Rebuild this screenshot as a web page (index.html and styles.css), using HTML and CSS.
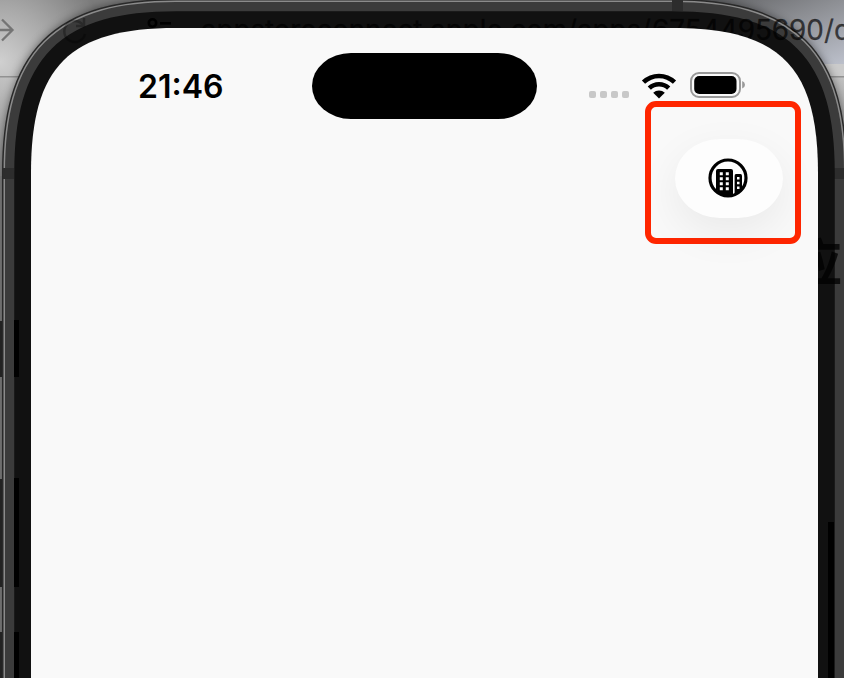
FILE: index.html
```html
<!DOCTYPE html>
<html lang="zh">
<head>
<meta charset="utf-8">
<title>Simulator</title>
<link rel="stylesheet" href="styles.css">
</head>
<body>
<main class="stage">
  <svg class="device" viewBox="0 0 844 678" aria-hidden="true">
    <defs>
      <path id="body" d="M31 760V173C31 66.300 69.300 28 176 28H673C779.700 28 818 66.300 818 173V760Z"/>
      <radialGradient id="left-bg" gradientUnits="userSpaceOnUse" cx="0" cy="62" r="110">
        <stop offset="0" stop-color="#d0d0d0"/><stop offset=".5" stop-color="#a8a8a8"/><stop offset="1" stop-color="#7c7c7c"/>
      </radialGradient>
      <linearGradient id="right-bg" x1="0" y1="0" x2="1" y2="1">
        <stop offset="0" stop-color="#5e5f61"/><stop offset=".5" stop-color="#8e9095"/><stop offset="1" stop-color="#bcc0cb"/>
      </linearGradient>
      <linearGradient id="side" x1="0" y1="0" x2="0" y2="1">
        <stop offset="0" stop-color="#c2c2c2"/><stop offset="1" stop-color="#8c8c8c"/>
      </linearGradient>
      <filter id="soft" x="-10%" y="-10%" width="120%" height="120%"><feGaussianBlur stdDeviation="5"/></filter>
    </defs>
    <rect class="base" width="844" height="678"/>
    <rect width="200" height="76" fill="url(#left-bg)"/>
    <rect y="76" width="60" height="100" fill="url(#side)"/>
    <rect class="rule" y="76" width="60" height="1.5"/>
    <rect x="690" width="154" height="64" fill="url(#right-bg)"/>
    <rect class="tab-edge" x="780" y="64" width="64" height="12"/>
    <rect x="780" y="76" width="64" height="100" fill="url(#side)"/>
    <rect class="rule" x="780" y="76" width="64" height="1.5"/>
    <use href="#body" class="shade" filter="url(#soft)"/>
    <path class="nav-arrow" d="M-4 30H12M2 19.500L12.500 30L2 40.500"/>
    <g class="notches">
      <rect x="0" y="321" width="3" height="56"/>
      <rect x="0" y="479" width="3" height="108"/>
      <rect x="0" y="632" width="3" height="50"/>
    </g>
    <use href="#body" class="edge-dark"/>
    <use href="#body" class="edge-light"/>
    <use href="#body" class="ring"/>
    <g class="ring-shadow">
      <rect x="3" y="168" width="11" height="11"/>
      <rect x="834" y="168" width="10" height="11"/>
      <rect x="672" y="0" width="11" height="11"/>
    </g>
    <use href="#body" class="bezel"/>
    <g class="keys">
      <rect x="14" y="320" width="5" height="57"/>
      <rect x="14" y="478" width="5" height="109"/>
      <rect x="14" y="632" width="5" height="50"/>
      <rect x="828" y="522" width="6" height="160"/>
    </g>
    <path class="reload" d="M83 25A10.500 10.500 0 1 0 85 34M84 18V26H76"/>
    <path class="tune" d="M160 23.300H171"/>
    <circle class="tune" cx="152.500" cy="23" r="3.700"/>
    <text class="url" x="201" y="40" textLength="450" lengthAdjust="spacingAndGlyphs">appstoreconnect.apple.com/apps/</text>
    <text class="url" x="652" y="40" textLength="199" lengthAdjust="spacingAndGlyphs">6754495690/d</text>
    <text class="heading" x="792" y="281">应</text>
    <use href="#body" class="screen"/>
  </svg>

  <header class="status">
    <time class="clock">21:46</time>
    <div class="island"></div>
    <div class="indicators">
      <div class="cell"><i></i><i></i><i></i><i></i></div>
      <svg class="wifi" viewBox="0 0 36 26" width="36" height="26">
        <path class="arc" d="M2.500 9.200A22.300 22.300 0 0 1 33.500 9.200M8.300 15.200A14 14 0 0 1 27.700 15.200"/>
        <path d="M18 25.500L12.200 19.800A8.300 8.300 0 0 1 23.800 19.800Z"/>
      </svg>
      <svg class="battery" viewBox="0 0 56 27" width="56" height="27">
        <rect class="case" x="1" y="1" width="49" height="24" rx="8"/>
        <rect x="4.200" y="4.100" width="42.300" height="17.800" rx="5"/>
        <path class="tip" d="M52.200 9Q55 10 55 12.700Q55 15.500 52.200 16.500Z"/>
      </svg>
    </div>
  </header>

  <section class="toolbar">
    <div class="highlight">
      <button class="pill" aria-label="Company">
        <svg class="office" viewBox="0 0 40 40" width="40" height="40">
          <circle class="outline" cx="20" cy="20" r="18"/>
          <path d="M8 13Q8 11 10 11H23Q25 11 25 13V36Q20 39 14 36L8 32Z"/>
          <path d="M26.500 18Q26.500 16 28 16H32.500Q34 16 34 18V31Q31 35 26.500 37Z"/>
          <path d="M9 33H25V36.500Q18 39 12 36Z"/>
          <g class="windows">
            <path d="M11.800 14.200h3v3h-3zM17.800 14.200h3v3h-3zM11.800 19.200h3v3h-3zM17.800 19.200h3v3h-3zM11.800 24.200h3v3h-3zM17.800 24.200h3v3h-3zM11.800 29.200h3v3h-3zM17.800 29.200h3v3h-3z"/>
            <path d="M29 19h2.500v2.500h-2.500zM29 23.700h2.500v2.500h-2.500zM29 28.400h2.500v2.500h-2.500z"/>
          </g>
          <path class="gap" d="M25.600 15V35.500"/>
        </svg>
      </button>
    </div>
  </section>
</main>
</body>
</html>
```
FILE: styles.css
```css
* { box-sizing: border-box; }
body { margin: 0; overflow: hidden; background: #777; font-family: Inter, "Liberation Sans", sans-serif; }
.stage { position: relative; width: 844px; height: 678px; overflow: hidden; }

.device { position: absolute; inset: 0; width: 844px; height: 678px; }
.base { fill: #858585; }
.rule { fill: #929292; }
.tab-edge { fill: #cbcbcb; }
.shade { fill: none; stroke: #000; stroke-width: 57; opacity: .5; }
.nav-arrow { fill: none; stroke: #747474; stroke-width: 2.3; }
.notches { fill: #222; }
.edge-dark { fill: none; stroke: #292929; stroke-width: 58; }
.edge-light { fill: none; stroke: #8b8b8b; stroke-width: 55; }
.ring { fill: none; stroke: #3b3b3b; stroke-width: 52; }
.ring-shadow { fill: #2d2d2d; }
.bezel { fill: none; stroke: #111; stroke-width: 33.500; }
.keys { fill: #000; }
.reload { fill: none; stroke: #000; stroke-opacity: .3; stroke-width: 2.5; }
.tune { fill: none; stroke: #000; stroke-width: 2.6; }
.url { font-size: 28px; fill: #000; fill-opacity: .68; stroke: #000; stroke-opacity: .4; stroke-width: .4; }
.heading { font: 700 50px "Noto Sans CJK SC", sans-serif; fill: #000; fill-opacity: .75; }
.screen { fill: #f9f9f9; }

.status { position: relative; display: flex; align-items: center; height: 66px; margin-top: 53px; padding-left: 138px; }
.clock { width: 174px; padding-top: 2px; font-size: 32px; font-weight: 600; line-height: 66px; color: #000; }
.island { width: 225px; height: 66px; border-radius: 39px / 33px; background: #000; }
.indicators { display: flex; align-items: center; margin-left: 52px; }
.cell { display: flex; gap: 4px; margin: 17px 12px 0 0; }
.cell i { width: 7px; height: 7px; border-radius: 2px; background: #c8c8c8; }
.wifi { margin: 0 13px 1px 0; }
.battery { margin-bottom: 1px; }
.arc { fill: none; stroke: #000; stroke-width: 4.6; }
.case { fill: none; stroke: #999; stroke-width: 2; }
.tip { fill: #999; }

.toolbar { position: relative; display: flex; justify-content: flex-end; margin-top: -18px; padding-right: 43px; }
.highlight { display: flex; justify-content: center; width: 156px; height: 143px; padding: 32px 0 0 11px; border: 6px solid #ff2600; border-radius: 11px; }
.pill { display: flex; align-items: center; justify-content: center; width: 108px; height: 79px; padding: 0; border: 0; border-radius: 45px / 39.500px; background: #fdfdfd; box-shadow: 0 14px 44px rgba(0, 0, 0, .065); }
.office { margin: 0 1px 1px 0; }
.outline { fill: none; stroke: #000; stroke-width: 3.2; }
.windows { fill: #fdfdfd; }
.gap { fill: none; stroke: #fdfdfd; stroke-width: 1.2; }
```
